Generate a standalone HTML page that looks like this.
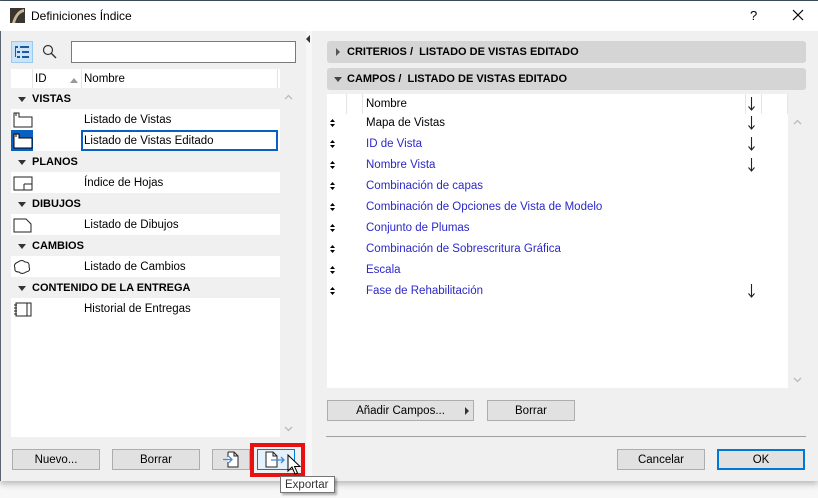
<!DOCTYPE html>
<html><head><meta charset="utf-8">
<style>
*{box-sizing:border-box;margin:0;padding:0}
body{width:818px;height:498px;background:#f7f7f7;font-family:"Liberation Sans",sans-serif;font-size:11px;color:#000;position:relative;overflow:hidden}
.a{position:absolute}
svg{display:block}
.win{left:0;top:0;width:818px;height:481px;background:#f0f0f0;border-top:1px solid #3c4b5a;border-left:1px solid #5a6470;box-shadow:0 3px 6px rgba(0,0,0,.25)}
.title{left:0;top:1px;width:818px;height:30px;background:#fff}
.btn{position:absolute;background:#e1e1e1;border:1px solid #adadad;text-align:center;line-height:21px;font-size:11.5px}
.grp{position:absolute;left:11px;width:269px;height:21px;background:#f0f0f0;font-weight:bold;line-height:23px;padding-left:21px;font-size:11px}
.grp:before{content:"";position:absolute;left:7px;top:9px;border-left:4px solid transparent;border-right:4px solid transparent;border-top:5px solid #333}
.row{position:absolute;left:11px;width:269px;height:21px;line-height:23px;font-size:11.5px}
.row span{position:absolute;left:73px}
.ico{position:absolute;left:2px;top:3px}
.rr{position:absolute;left:327px;width:461px;height:21px;line-height:23px;font-size:11.5px;color:#2c28c8}
.rr span{position:absolute;left:39px}
.rr i{position:absolute;left:3px;top:7px;line-height:0}
.rr b{position:absolute;left:421px;top:4px;line-height:0}
.hdr{position:absolute;left:327px;width:479px;height:22px;background:#d5d5d5;border-radius:3px;font-weight:bold;line-height:23px;padding-left:20px;font-size:11px}
</style></head><body>
<div class="a win"></div>
<div class="a title"></div>
<svg class="a" style="left:10px;top:8px" width="15" height="15"><rect width="15" height="15" fill="#3a3530"/><path d="M2 15 Q6 2 14 1 L14 4 Q8 5 5 15Z" fill="#c8b89a"/></svg>
<div class="a" style="left:31px;top:9px;font-size:12px">Definiciones Índice</div>
<div class="a" style="left:750px;top:8px;font-size:13px">?</div>
<svg class="a" style="left:792px;top:9px" width="12" height="12"><path d="M1 1L11 11M11 1L1 11" stroke="#000" stroke-width="1.2"/></svg>

<div class="a" style="left:11px;top:41px;width:22px;height:22px;background:#cce4f7;border:1px solid #99c9ef"></div>
<svg class="a" style="left:14px;top:45px" width="16" height="14"><g fill="#1e5aa0"><rect x="1" y="1" width="3" height="2"/><rect x="6" y="1" width="9" height="2"/><rect x="3" y="6" width="3" height="2"/><rect x="8" y="6" width="7" height="2"/><rect x="3" y="11" width="3" height="2"/><rect x="8" y="11" width="7" height="2"/><rect x="1" y="3" width="1" height="9"/></g></svg>
<svg class="a" style="left:42px;top:44px" width="15" height="15"><circle cx="6" cy="6" r="4.5" fill="none" stroke="#333" stroke-width="1.2"/><path d="M9.5 9.5L14 14" stroke="#333" stroke-width="1.4"/></svg>
<div class="a" style="left:71px;top:41px;width:225px;height:22px;background:#fff;border:1px solid #7a7a7a"></div>

<div class="a" style="left:11px;top:69px;width:269px;height:368px;background:#fff"></div>
<div class="a" style="left:280px;top:88px;width:16px;height:349px;background:#f0f0f0"></div>
<svg class="a" style="left:284px;top:94px" width="9" height="6"><path d="M1 5L4.5 1.5L8 5" fill="none" stroke="#bbb" stroke-width="1.3"/></svg>
<svg class="a" style="left:284px;top:426px" width="9" height="6"><path d="M1 1L4.5 4.5L8 1" fill="none" stroke="#bbb" stroke-width="1.3"/></svg>
<div class="a" style="left:32px;top:69px;width:1px;height:19px;background:#e5e5e5"></div>
<div class="a" style="left:81px;top:69px;width:1px;height:19px;background:#e5e5e5"></div>
<div class="a" style="left:277px;top:69px;width:1px;height:19px;background:#e5e5e5"></div>
<div class="a" style="left:35px;top:73px;font-size:11.5px">ID</div>
<div class="a" style="left:70px;top:78px;border-left:4px solid transparent;border-right:4px solid transparent;border-bottom:5px solid #999"></div>
<div class="a" style="left:84px;top:73px;font-size:11.5px">Nombre</div>

<div class="grp" style="top:88px">VISTAS</div>
<div class="row" style="top:109px"><svg class="ico" width="20" height="16"><path d="M1 1H6V5H19V15H1Z M3 1V4" fill="none" stroke="#222"/></svg><span>Listado de Vistas</span></div>
<div class="a" style="left:11px;top:130px;width:22px;height:21px;background:#0a5fc2"></div>
<svg class="a" style="left:13px;top:133px" width="20" height="16"><path d="M1 1H6V5H19V15H1Z" fill="#fff" stroke="#000"/><path d="M3 1V4" stroke="#000"/></svg>
<div class="a" style="left:81px;top:130px;width:197px;height:21px;border:2px solid #0a5fc2;line-height:19px;padding-left:1px;font-size:11.5px">Listado de Vistas Editado</div>
<div class="grp" style="top:151px">PLANOS</div>
<div class="row" style="top:172px"><svg class="ico" width="20" height="16"><path d="M1 2H19V15H1Z M11 9H19 M11 9V15" fill="none" stroke="#222"/></svg><span>Índice de Hojas</span></div>
<div class="grp" style="top:193px">DIBUJOS</div>
<div class="row" style="top:214px"><svg class="ico" width="20" height="16"><path d="M1 2H13L18 7V15H1Z" fill="none" stroke="#222"/></svg><span>Listado de Dibujos</span></div>
<div class="grp" style="top:235px">CAMBIOS</div>
<div class="row" style="top:256px"><svg class="ico" width="20" height="16"><path d="M5 3Q9 0 12 3Q17 3 16 8Q18 12 13 13Q9 16 6 13Q1 13 2 9Q0 5 5 3Z" fill="none" stroke="#222"/></svg><span>Listado de Cambios</span></div>
<div class="grp" style="top:277px">CONTENIDO DE LA ENTREGA</div>
<div class="row" style="top:298px"><svg class="ico" width="20" height="16"><path d="M3 2H18V15H3Z M14 2V15 M1 4H4M1 7H4M1 10H4M1 13H4" fill="none" stroke="#222"/></svg><span>Historial de Entregas</span></div>

<div class="btn" style="left:12px;top:449px;width:88px;height:21px">Nuevo...</div>
<div class="btn" style="left:112px;top:449px;width:88px;height:21px">Borrar</div>
<div class="btn" style="left:212px;top:449px;width:38px;height:21px"></div>
<svg class="a" style="left:221px;top:451px" width="20" height="17"><path d="M7 1H13L17 5V16H7V11 M7 6V1 M13 1V5H17" fill="#fff" stroke="#222"/><path d="M2 8.5H11 M8 5.5L11 8.5L8 11.5" fill="none" stroke="#3a8ae6" stroke-width="1.3"/></svg>
<div class="a" style="left:250px;top:443px;width:55px;height:34px;border:4px solid #e81010"></div>
<div class="a" style="left:257px;top:449px;width:38px;height:21px;background:#e5f1fb;border:1px solid #0078d7"></div>
<svg class="a" style="left:265px;top:451px" width="22" height="17"><path d="M1 1H8L12 5V16H1Z M8 1V5H12" fill="#fff" stroke="#222"/><path d="M6 9H19 M16 6L19 9L16 12" fill="none" stroke="#3a8ae6" stroke-width="1.3"/></svg>
<svg class="a" style="left:287px;top:454px" width="14" height="22"><path d="M1 1V17L5 13L8 20L10.5 19L7.5 12.5H13Z" fill="#fff" stroke="#000" stroke-width="1"/></svg>

<div class="a" style="left:306px;top:31px;width:6px;height:450px;background:#f7f7f7"></div>
<div class="a" style="left:306px;top:35px;border-top:4px solid transparent;border-bottom:4px solid transparent;border-right:4px solid #333"></div>

<div class="hdr" style="top:41px"><span class="a" style="left:9px;top:7px;border-top:4px solid transparent;border-bottom:4px solid transparent;border-left:4px solid #555"></span>CRITERIOS /&nbsp; LISTADO DE VISTAS EDITADO</div>
<div class="hdr" style="top:68px"><span class="a" style="left:7px;top:9px;border-left:4px solid transparent;border-right:4px solid transparent;border-top:5px solid #444"></span>CAMPOS /&nbsp; LISTADO DE VISTAS EDITADO</div>
<div class="a" style="left:327px;top:94px;width:461px;height:294px;background:#fff"></div>
<div class="a" style="left:788px;top:114px;width:18px;height:274px;background:#f0f0f0"></div>
<svg class="a" style="left:793px;top:119px" width="9" height="6"><path d="M1 5L4.5 1.5L8 5" fill="none" stroke="#bbb" stroke-width="1.3"/></svg>
<svg class="a" style="left:793px;top:377px" width="9" height="6"><path d="M1 1L4.5 4.5L8 1" fill="none" stroke="#bbb" stroke-width="1.3"/></svg>
<div class="a" style="left:346px;top:94px;width:1px;height:20px;background:#e5e5e5"></div>
<div class="a" style="left:362px;top:94px;width:1px;height:20px;background:#e5e5e5"></div>
<div class="a" style="left:745px;top:94px;width:1px;height:20px;background:#e5e5e5"></div>
<div class="a" style="left:761px;top:94px;width:1px;height:20px;background:#e5e5e5"></div>
<div class="a" style="left:787px;top:94px;width:1px;height:20px;background:#e5e5e5"></div>

<svg width="0" height="0" style="position:absolute"><defs>
<g id="ud"><path d="M0 3L2.5 0L5 3Z M0 5L2.5 8L5 5Z" fill="#000"/></g>
<g id="dn"><path d="M3.5 0V13 M0.5 9.5L3.5 13L6.5 9.5" fill="none" stroke="#222" stroke-width="1.1"/></g>
</defs></svg>
<div class="rr" style="top:93px;color:#000"><span>Nombre</span><b><svg width="7" height="14"><use href="#dn"/></svg></b></div>
<div class="rr" style="top:112px;color:#000"><i><svg width="5" height="8"><use href="#ud"/></svg></i><span>Mapa de Vistas</span><b><svg width="7" height="14"><use href="#dn"/></svg></b></div>
<div class="rr" style="top:133px"><i><svg width="5" height="8"><use href="#ud"/></svg></i><span>ID de Vista</span><b><svg width="7" height="14"><use href="#dn"/></svg></b></div>
<div class="rr" style="top:154px"><i><svg width="5" height="8"><use href="#ud"/></svg></i><span>Nombre Vista</span><b><svg width="7" height="14"><use href="#dn"/></svg></b></div>
<div class="rr" style="top:175px"><i><svg width="5" height="8"><use href="#ud"/></svg></i><span>Combinación de capas</span></div>
<div class="rr" style="top:196px"><i><svg width="5" height="8"><use href="#ud"/></svg></i><span>Combinación de Opciones de Vista de Modelo</span></div>
<div class="rr" style="top:217px"><i><svg width="5" height="8"><use href="#ud"/></svg></i><span>Conjunto de Plumas</span></div>
<div class="rr" style="top:238px"><i><svg width="5" height="8"><use href="#ud"/></svg></i><span>Combinación de Sobrescritura Gráfica</span></div>
<div class="rr" style="top:259px"><i><svg width="5" height="8"><use href="#ud"/></svg></i><span>Escala</span></div>
<div class="rr" style="top:280px"><i><svg width="5" height="8"><use href="#ud"/></svg></i><span>Fase de Rehabilitación</span><b><svg width="7" height="14"><use href="#dn"/></svg></b></div>

<div class="btn" style="left:327px;top:400px;width:147px;height:21px">Añadir Campos...<span class="a" style="right:4px;top:6px;border-top:4px solid transparent;border-bottom:4px solid transparent;border-left:4px solid #333"></span></div>
<div class="btn" style="left:487px;top:400px;width:88px;height:21px">Borrar</div>
<div class="a" style="left:326px;top:436px;width:480px;height:1px;background:#a0a0a0"></div>
<div class="btn" style="left:617px;top:449px;width:88px;height:21px">Cancelar</div>
<div class="btn" style="left:717px;top:449px;width:88px;height:21px;border:2px solid #0078d7;line-height:19px">OK</div>

<div class="a" style="left:280px;top:476px;width:55px;height:17px;background:#fff;border:1px solid #767676;box-shadow:2px 2px 2px rgba(0,0,0,.3);font-size:11.5px;line-height:16px;padding-left:4px;color:#333">Exportar</div>
</body></html>
